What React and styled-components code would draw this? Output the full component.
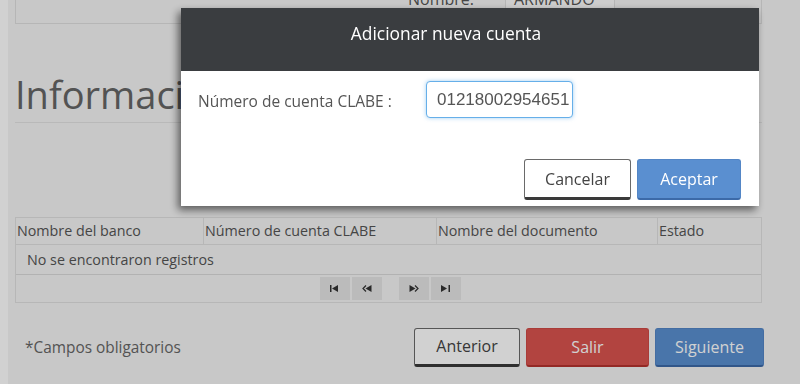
import React from 'react';
import styled, { createGlobalStyle } from 'styled-components';

const GlobalStyle = createGlobalStyle`
  html, body {
    margin: 0;
    padding: 0;
    background: #ffffff;
    font-family: "Open Sans", "Liberation Sans", sans-serif;
    overflow: hidden;
  }
  * { box-sizing: border-box; }
`;

const Page = styled.div`
  padding-left: 8px;
  height: 384px;
`;

const Sheet = styled.div`
  background: #f4f4f4;
  height: 384px;
  padding: 0 36px 0 7px;
  overflow: hidden;
`;

const InfoBox = styled.div`
  display: flex;
  height: 24px;
  width: 747px;
  border: 1px solid #dedede;
  border-top: none;
  overflow: hidden;
`;

const FieldLabel = styled.div`
  width: 489px;
  padding-right: 31px;
  text-align: right;
  font-size: 16px;
  line-height: 24px;
  margin-top: -13px;
  color: #555;
`;

const FieldValue = styled.div`
  width: 110px;
  padding-left: 8px;
  font-size: 16px;
  line-height: 24px;
  color: #555;
  background: #fbfbfb;
  border-left: 1px solid #dedede;
  border-right: 1px solid #dedede;
  span {
    display: block;
    margin-top: -13px;
  }
`;

const SectionTitle = styled.h1`
  margin: 50px 0 0;
  width: 747px;
  font-size: 38px;
  font-weight: 400;
  line-height: 1.1;
  color: #666;
  padding-bottom: 6px;
  border-bottom: 1px solid #e2e2e2;
`;

const Grid = styled.div`
  margin-top: 94px;
  width: 747px;
  border: 1px solid #e0e0e0;
  font-size: 14.3px;
  color: #555;
`;

const HeadRow = styled.div`
  display: grid;
  grid-template-columns: 187px 233px 221px 1fr;
  height: 27px;
  border-bottom: 1px solid #e0e0e0;
`;

const HeadCell = styled.div`
  padding-left: ${(p) => (p.$first ? '1px' : '1px')};
  line-height: 26px;
  border-left: ${(p) => (p.$first ? 'none' : '1px solid #e0e0e0')};
`;

const EmptyRow = styled.div`
  height: 30px;
  line-height: 30px;
  padding-left: 11px;
  border-bottom: 1px solid #dadada;
`;

const Pager = styled.div`
  height: 27px;
  display: flex;
  align-items: center;
  justify-content: center;
  gap: 2px;
  padding-left: 3px;
`;

const PageButton = styled.div`
  width: 30px;
  height: 23px;
  background: #e4e4e4;
  display: flex;
  align-items: center;
  justify-content: center;
  margin-left: ${(p) => (p.$gap ? '15px' : '0')};
`;

const Footer = styled.div`
  margin-top: 25px;
  display: flex;
  align-items: center;
  height: 39px;
`;

const Note = styled.div`
  flex: 1;
  padding-left: 10px;
  font-size: 15.4px;
  color: #666;
`;

const Button = styled.button`
  height: ${(p) => p.$h || 39}px;
  width: ${(p) => p.$w}px;
  margin-left: 6px;
  border-radius: 3px;
  font-family: "Open Sans", "Liberation Sans", sans-serif;
  font-size: 16px;
  padding: 0;
  cursor: pointer;
  ${(p) =>
    p.$kind === 'danger'
      ? 'background:#d9534f;color:#fff;border:1px solid #cf4a46;border-bottom:2px solid #b5322e;'
      : p.$kind === 'primary'
      ? 'background:#5a8fd0;color:#fff;border:1px solid #5386c6;border-bottom:2px solid #3c6aa8;'
      : 'background:#fff;color:#444;border:1px solid #6a6a6a;border-bottom:3px solid #3a3a3a;'}
`;

const Backdrop = styled.div`
  position: fixed;
  inset: 0;
  background: rgba(0, 0, 0, 0.18);
`;

const Dialog = styled.div`
  position: fixed;
  top: 8px;
  left: 181px;
  width: 578px;
  background: #fff;
  box-shadow: -3px 4px 8px rgba(0, 0, 0, 0.55);
`;

const DialogHead = styled.div`
  height: 63px;
  background: #3a3d40;
  color: #fff;
  text-align: center;
  font-size: 17.4px;
  padding: 13px 48px 0 0;
`;

const DialogBody = styled.div`
  padding: 10px 18px 6px 19px;
`;

const FormRow = styled.div`
  display: grid;
  grid-template-columns: 226px auto;
  align-items: center;
`;

const FormLabel = styled.label`
  font-size: 15.5px;
  color: #555;
  padding-top: 2px;
  margin-left: -2px;
`;

const TextInput = styled.input`
  width: 147px;
  height: 37px;
  border: 1px solid #66afe9;
  border-radius: 4px;
  box-shadow: 0 0 4px rgba(102, 175, 233, 0.6);
  font-family: "Liberation Sans", Arial, sans-serif;
  font-size: 17px;
  color: #555;
  padding: 0 0 0 10px;
  outline: none;
`;

const Actions = styled.div`
  display: flex;
  justify-content: flex-end;
  margin-top: 41px;
`;

const icons = {
  first: (
    <svg width="9" height="7" viewBox="0 0 9 7">
      <rect x="0" y="0" width="1.5" height="7" fill="#333" />
      <path d="M2 3.5 L8 0 L8 7 Z" fill="#333" />
    </svg>
  ),
  prev: (
    <svg width="10" height="7" viewBox="0 0 10 7">
      <path d="M4 0.5 L1 3.5 L4 6.5" fill="none" stroke="#333" strokeWidth="1.2" />
      <path d="M3.5 3.5 L9.5 0 L9.5 7 Z" fill="#333" />
    </svg>
  ),
  next: (
    <svg width="10" height="7" viewBox="0 0 10 7">
      <path d="M0.5 0 L6.5 3.5 L0.5 7 Z" fill="#333" />
      <path d="M6 0.5 L9 3.5 L6 6.5" fill="none" stroke="#333" strokeWidth="1.2" />
    </svg>
  ),
  last: (
    <svg width="9" height="7" viewBox="0 0 9 7">
      <path d="M0 0 L6 3.5 L0 7 Z" fill="#333" />
      <rect x="7.5" y="0" width="1.5" height="7" fill="#333" />
    </svg>
  ),
};

const columns = ['Nombre del banco', 'Número de cuenta CLABE', 'Nombre del documento', 'Estado'];

export default function App() {
  return (
    <>
      <GlobalStyle />
      <Page>
        <Sheet>
          <InfoBox>
            <FieldLabel>Nombre:</FieldLabel>
            <FieldValue>
              <span>ARMANDO</span>
            </FieldValue>
          </InfoBox>
          <SectionTitle>Información</SectionTitle>
          <Grid>
            <HeadRow>
              {columns.map((c, i) => (
                <HeadCell key={c} $first={i === 0}>
                  {c}
                </HeadCell>
              ))}
            </HeadRow>
            <EmptyRow>No se encontraron registros</EmptyRow>
            <Pager>
              <PageButton>{icons.first}</PageButton>
              <PageButton>{icons.prev}</PageButton>
              <PageButton $gap>{icons.next}</PageButton>
              <PageButton>{icons.last}</PageButton>
            </Pager>
          </Grid>
          <Footer>
            <Note>*Campos obligatorios</Note>
            <Button $w={106}>Anterior</Button>
            <Button $w={123} $kind="danger">Salir</Button>
            <Button $w={109} $kind="primary">Siguiente</Button>
          </Footer>
        </Sheet>
      </Page>
      <Backdrop />
      <Dialog>
        <DialogHead>Adicionar nueva cuenta</DialogHead>
        <DialogBody>
          <FormRow>
            <FormLabel>Número de cuenta CLABE :</FormLabel>
            <TextInput defaultValue="01218002954651" />
          </FormRow>
          <Actions>
            <Button $w={107} $h={41}>Cancelar</Button>
            <Button $w={104} $h={41} $kind="primary">Aceptar</Button>
          </Actions>
        </DialogBody>
      </Dialog>
    </>
  );
}
